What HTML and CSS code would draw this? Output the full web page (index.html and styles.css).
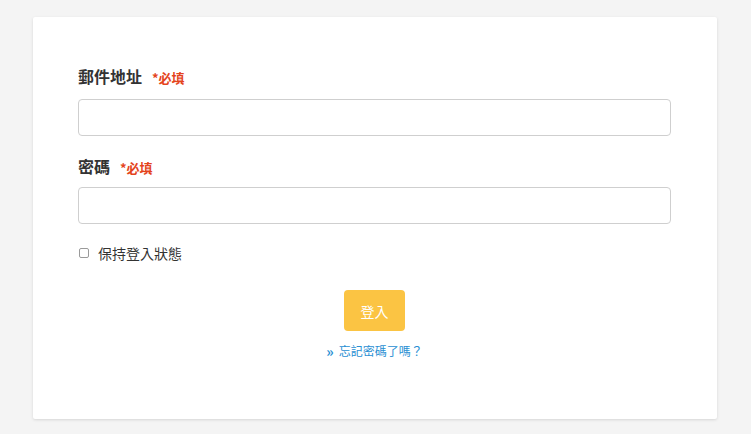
FILE: index.html
```html
<!DOCTYPE html>
<html lang="zh-Hant">
<head>
<meta charset="utf-8">
<link rel="stylesheet" href="styles.css">
</head>
<body>
<div class="card">
  <form class="form">
    <div class="field">
      <label class="label">郵件地址<span class="req">*必填</span></label>
      <input class="input" type="text">
    </div>
    <div class="field">
      <label class="label label-2">密碼<span class="req">*必填</span></label>
      <input class="input" type="password">
    </div>
    <label class="remember"><span class="box"></span>保持登入狀態</label>
    <div class="actions">
      <button class="btn" type="button">登入</button>
      <a class="forgot" href="#"><span class="arrow">»</span>忘記密碼了嗎？</a>
    </div>
  </form>
</div>
</body>
</html>
```
FILE: styles.css
```css
* { box-sizing: border-box; }
html, body { margin: 0; height: 100%; }
body {
  background: #f4f4f4;
  padding: 17px 34px 0 33px;
  font-family: "Noto Sans CJK TC", "Noto Sans", sans-serif;
  color: #333;
}
.card {
  background: #fff;
  height: 402px;
  border-radius: 2px;
  box-shadow: 0 1px 3px rgba(0,0,0,0.12);
  padding: 48px 46px 0 45px;
}
.form { display: flex; flex-direction: column; }
.field { display: flex; flex-direction: column; margin-bottom: 19px; }
.label {
  font-size: 16px;
  font-weight: bold;
  height: 22px;
  line-height: 22px;
  margin-bottom: 12px;
  display: flex;
  align-items: baseline;
  color: #333;
  overflow: visible;
}
.label-2 { margin-bottom: 10px; }
.req {
  color: #e4441c;
  font-size: 13px;
  line-height: 22px;
  margin-left: 10px;
}
.input {
  height: 37px;
  border: 1px solid #cfcfcf;
  border-radius: 4px;
  background: #fff;
  width: 100%;
  margin: 0;
}
.remember {
  display: flex;
  align-items: center;
  font-size: 14px;
  height: 20px;
  line-height: 20px;
  color: #333;
}
.box {
  width: 10px;
  height: 10px;
  border: 1px solid #9a9a9a;
  border-radius: 2px;
  margin-left: 1px;
  margin-right: 9px;
}
.actions {
  display: flex;
  flex-direction: column;
  align-items: center;
  margin-top: 27px;
}
.btn {
  width: 61px;
  height: 41px;
  border: none;
  border-radius: 4px;
  background: #fbc443;
  color: #fff;
  font-family: inherit;
  font-size: 14px;
  padding: 0;
}
.forgot {
  margin-top: 11px;
  font-size: 12px;
  height: 18px;
  line-height: 18px;
  color: #2a8fd3;
  text-decoration: none;
  display: flex;
  align-items: center;
}
.arrow { margin-right: 5px; font-size: 14px; font-weight: bold; }
```
